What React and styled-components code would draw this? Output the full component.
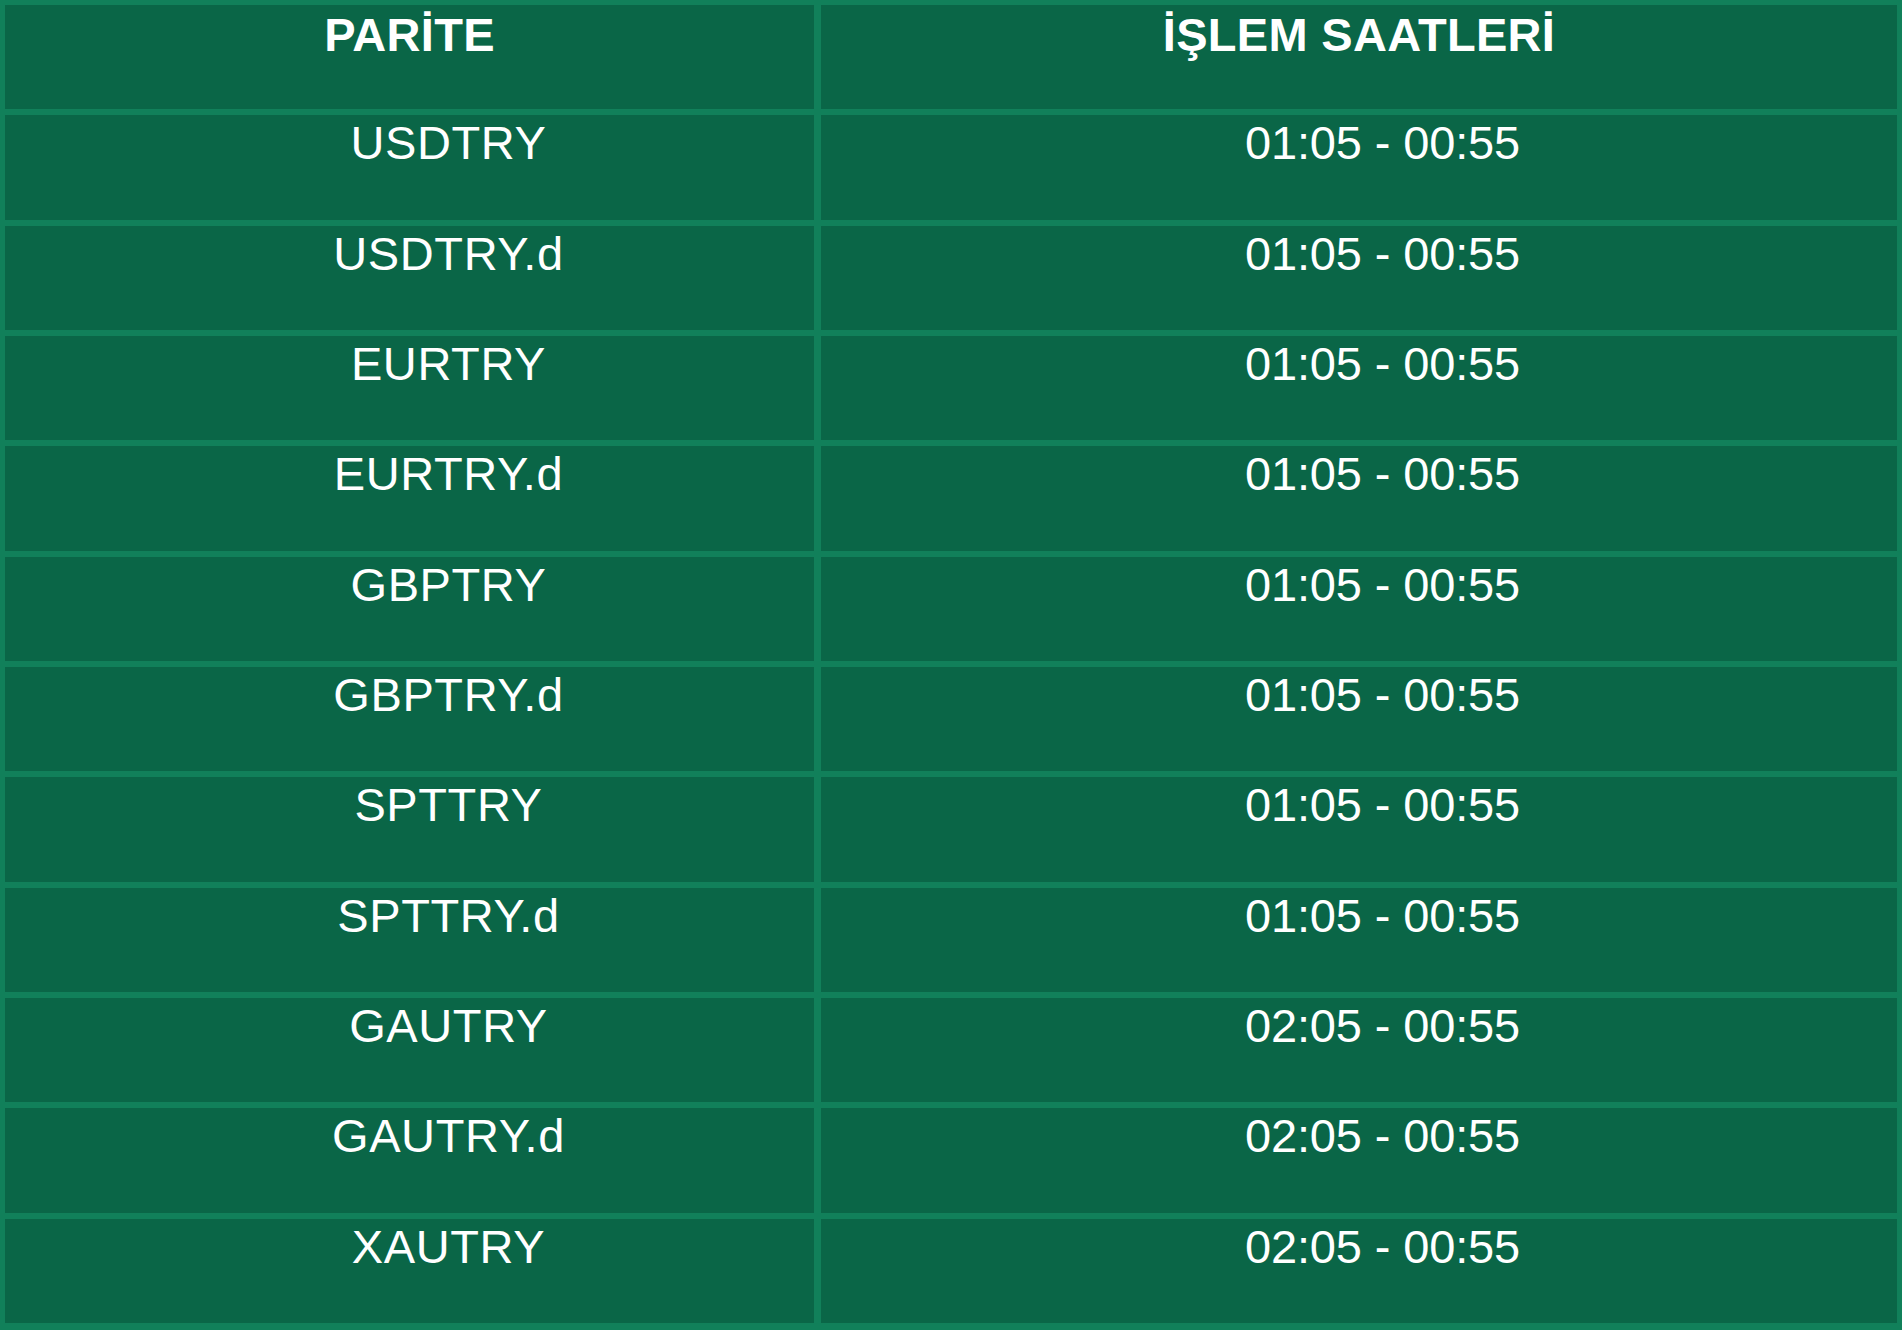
import React from 'react';
import styled, { createGlobalStyle } from 'styled-components';

const rows = [
  ['USDTRY', '01:05 - 00:55'],
  ['USDTRY.d', '01:05 - 00:55'],
  ['EURTRY', '01:05 - 00:55'],
  ['EURTRY.d', '01:05 - 00:55'],
  ['GBPTRY', '01:05 - 00:55'],
  ['GBPTRY.d', '01:05 - 00:55'],
  ['SPTTRY', '01:05 - 00:55'],
  ['SPTTRY.d', '01:05 - 00:55'],
  ['GAUTRY', '02:05 - 00:55'],
  ['GAUTRY.d', '02:05 - 00:55'],
  ['XAUTRY', '02:05 - 00:55'],
];

export default function App() {
  return (
    <>
      <GlobalStyle />
      <Table>
        <HeaderCell>PARİTE</HeaderCell>
        <HeaderCell>İŞLEM SAATLERİ</HeaderCell>
        {rows.map(([pair, hours]) => (
          <React.Fragment key={pair}>
            <Cell $shift={78} $spacing={0.6}>{pair}</Cell>
            <Cell $shift={47} $spacing={-0.15}>{hours}</Cell>
          </React.Fragment>
        ))}
      </Table>
    </>
  );
}

const GlobalStyle = createGlobalStyle`
  html, body {
    margin: 0;
    padding: 0;
    background: #ffffff;
  }
`;

const Table = styled.div`
  width: 1902px;
  height: 1330px;
  box-sizing: border-box;
  padding: 5px 5px 7px 5px;
  background: #11805a;
  display: grid;
  grid-template-columns: 809px 1fr;
  grid-template-rows: repeat(12, 1fr);
  column-gap: 7px;
  row-gap: 6px;
  font-family: "Liberation Sans", Arial, sans-serif;
  font-size: 47px;
  color: #ffffff;
`;

const HeaderCell = styled.div`
  background: #0a6647;
  text-align: center;
  font-weight: bold;
  padding-top: 2px;
  letter-spacing: 0.3px;
`;

const Cell = styled.div`
  background: #0a6647;
  text-align: center;
  padding-top: 0;
  padding-left: ${(p) => p.$shift}px;
  letter-spacing: ${(p) => p.$spacing}px;
`;
